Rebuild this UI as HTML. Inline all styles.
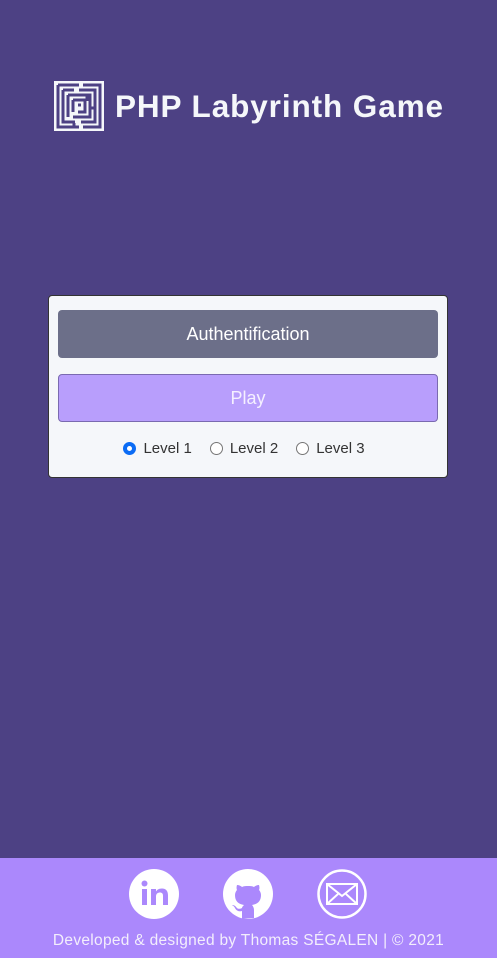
<!DOCTYPE html>
<html><head><meta charset="utf-8"><style>
*{margin:0;padding:0;box-sizing:border-box}
body{width:497px;height:958px;background:#4d4184;font-family:"Liberation Sans",sans-serif;position:relative;overflow:hidden}
.title{position:absolute;left:54px;top:81px;display:flex;align-items:center}
.title span{color:#f5f7fa;font-weight:bold;font-size:31.5px;margin-left:11px;letter-spacing:0.9px}
.card{position:absolute;left:48px;top:295px;width:400px;height:183px;background:#f5f7fa;border:1px solid #333;border-radius:4px}
.btn{position:absolute;left:9px;width:380px;height:48px;border-radius:4px;color:#fff;font-size:18px;display:flex;align-items:center;justify-content:center}
.auth{top:14px;background:#6c6f89}
.play{top:78px;background:#b89efc;border:1px solid #7a6ab0;color:#f5f0ff}
.radios{position:absolute;top:144px;left:-4px;width:100%;display:flex;justify-content:center;font-size:15px;color:#333;gap:18px}
.radios label{display:flex;align-items:center}
.rb{width:13px;height:13px;border-radius:50%;border:1px solid #767676;background:#fff;margin-right:7px;display:inline-block}
.rb.on{border:4px solid #0b6cf5;width:13px;height:13px}
footer{position:absolute;left:0;top:858px;width:497px;height:100px;background:#ab88fc}
.ic{position:absolute;top:11px;width:50px;height:50px}
.ft{position:absolute;top:74px;width:100%;text-align:center;color:#f3eefc;font-size:15.5px;letter-spacing:0.3px}
</style></head><body>
<div class="title">
<svg width="50" height="50" viewBox="0 0 50 50"><rect width="50" height="50" fill="#f5f7fa"/><g fill="none" stroke="#4d4184" stroke-width="3"><path d="M4 4H25M29 4H46V46H29M25 46H4V4"/><path d="M9 9V41H21M9 9H20M25 9H41V41H27"/><path d="M14 14V36M14 14H36V36H19"/><path d="M19 19V31M19 19H31V31H24M24 24H27"/><path d="M20 42V46M33 14V20M41 27H36"/></g></svg>
<span>PHP Labyrinth Game</span></div>
<div class="card">
<div class="btn auth">Authentification</div>
<div class="btn play">Play</div>
<div class="radios"><label><span class="rb on"></span>Level 1</label><label><span class="rb"></span>Level 2</label><label><span class="rb"></span>Level 3</label></div>
</div>
<footer>
<svg class="ic" style="left:129px" viewBox="0 0 50 50"><circle cx="25" cy="25" r="25" fill="#fff"/><rect x="13" y="20" width="5" height="16" fill="#ab88fc"/><circle cx="15.5" cy="14.5" r="3" fill="#ab88fc"/><path d="M22 20h5v2.5c1.5-2.5 4-3 6-3 4 0 6 2.5 6 7V36h-5v-9c0-2.5-1-3.5-3-3.5s-4 1-4 4V36h-5z" fill="#ab88fc"/></svg>
<svg class="ic" style="left:223px" viewBox="0 0 50 50"><circle cx="25" cy="25" r="25" fill="#fff"/><path d="M19 50V42c-4 1-6-1-7-3-1-2-2-2-3-3 3 0 4 2 5 3 1 1 3 1 5 0 0-1 1-2 2-3-6-1-9-4-9-10 0-2 1-4 2-5-1-2 0-5 0-5 2 0 4 1 5 2 2-1 4-1 6-1s4 0 6 1c1-1 3-2 5-2 0 0 1 3 0 5 1 1 2 3 2 5 0 6-3 9-9 10 1 1 2 3 2 5v8z" fill="#ab88fc"/></svg>
<svg class="ic" style="left:317px" viewBox="0 0 50 50"><circle cx="25" cy="25" r="23.5" fill="none" stroke="#fff" stroke-width="2.5"/><rect x="10" y="15" width="30" height="20" fill="none" stroke="#fff" stroke-width="2"/><path d="M10 15l15 12 15-12M10 35l11-10M40 35 29 25" fill="none" stroke="#fff" stroke-width="2"/></svg>
<div class="ft">Developed &amp; designed by Thomas SÉGALEN | © 2021</div>
</footer>
</body></html>
